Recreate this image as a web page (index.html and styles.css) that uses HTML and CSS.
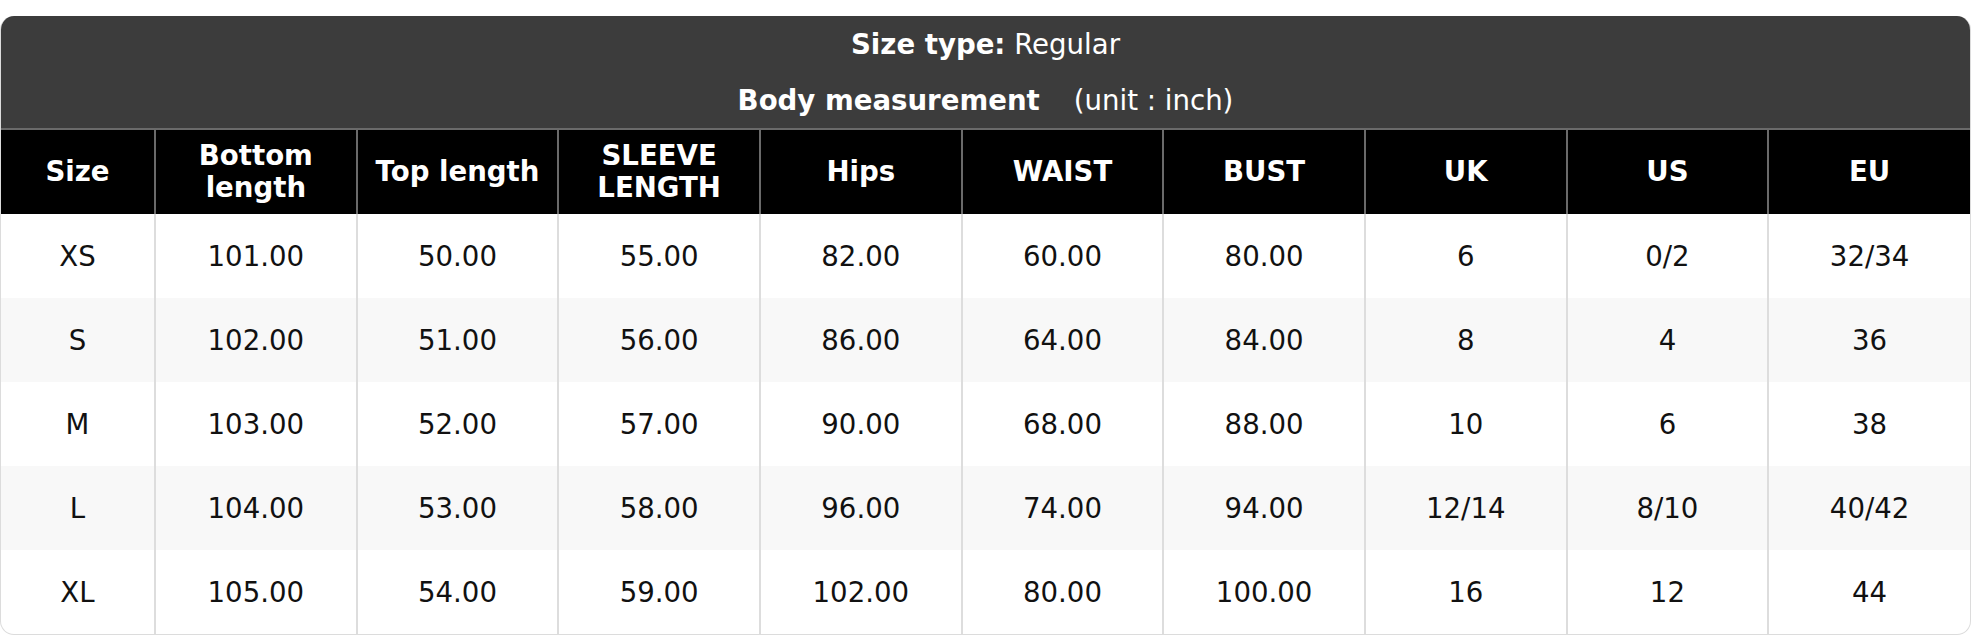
FILE: index.html
```html
<!DOCTYPE html>
<html>
<head>
<meta charset="utf-8">
<link rel="stylesheet" href="styles.css">
</head>
<body>
<div class="wrap">
  <div class="caption">
    <div class="cap-row"><b>Size type:</b> Regular</div>
    <div class="cap-row"><b>Body measurement</b><span class="unit">(unit : inch)</span></div>
  </div>
  <table class="size-table">
    <colgroup>
      <col class="c-first">
      <col class="c"><col class="c"><col class="c"><col class="c"><col class="c"><col class="c"><col class="c"><col class="c"><col class="c">
    </colgroup>
    <thead>
      <tr>
        <th>Size</th><th>Bottom<br>length</th><th>Top length</th><th>SLEEVE<br>LENGTH</th><th>Hips</th><th>WAIST</th><th>BUST</th><th>UK</th><th>US</th><th>EU</th>
      </tr>
    </thead>
    <tbody>
      <tr><td>XS</td><td>101.00</td><td>50.00</td><td>55.00</td><td>82.00</td><td>60.00</td><td>80.00</td><td>6</td><td>0/2</td><td>32/34</td></tr>
      <tr class="alt"><td>S</td><td>102.00</td><td>51.00</td><td>56.00</td><td>86.00</td><td>64.00</td><td>84.00</td><td>8</td><td>4</td><td>36</td></tr>
      <tr><td>M</td><td>103.00</td><td>52.00</td><td>57.00</td><td>90.00</td><td>68.00</td><td>88.00</td><td>10</td><td>6</td><td>38</td></tr>
      <tr class="alt"><td>L</td><td>104.00</td><td>53.00</td><td>58.00</td><td>96.00</td><td>74.00</td><td>94.00</td><td>12/14</td><td>8/10</td><td>40/42</td></tr>
      <tr><td>XL</td><td>105.00</td><td>54.00</td><td>59.00</td><td>102.00</td><td>80.00</td><td>100.00</td><td>16</td><td>12</td><td>44</td></tr>
    </tbody>
  </table>
</div>
</body>
</html>
```

FILE: styles.css
```css
html, body {
  margin: 0;
  padding: 0;
  background: #ffffff;
}
body {
  padding-top: 16px;
  font-family: "DejaVu Sans", "Liberation Sans", sans-serif;
  font-size: 27.6px;
  color: #000;
}
.wrap {
  width: 1971px;
  box-sizing: border-box;
  border: 1px solid #dcdcdc;
  border-top: none;
  border-radius: 14px;
  overflow: hidden;
  background: #fff;
}
.caption {
  background: #3c3c3c;
  color: #fff;
  display: flex;
  flex-direction: column;
}
.cap-row {
  height: 56px;
  display: flex;
  align-items: center;
  justify-content: center;
  white-space: pre;
}
.cap-row b {
  font-weight: bold;
}
.unit {
  margin-left: 34px;
}
.size-table {
  width: 100%;
  border-collapse: collapse;
  table-layout: fixed;
}
.c-first {
  width: 154px;
}
.size-table th {
  background: #000;
  color: #fff;
  font-weight: bold;
  height: 84px;
  padding: 0;
  text-align: center;
  vertical-align: middle;
  line-height: 32px;
  border: 2px solid #6a6a6a;
  border-bottom: none;
}
.size-table th:first-child {
  border-left: none;
}
.size-table th:last-child {
  border-right: none;
}
.size-table td {
  height: 84px;
  padding: 0;
  text-align: center;
  vertical-align: middle;
  border-left: 2px solid #dddddd;
  border-right: 2px solid #dddddd;
  color: #111;
}
.size-table td:first-child {
  border-left: none;
}
.size-table td:last-child {
  border-right: none;
}
.size-table tr.alt td {
  background: #f8f8f8;
}
```
